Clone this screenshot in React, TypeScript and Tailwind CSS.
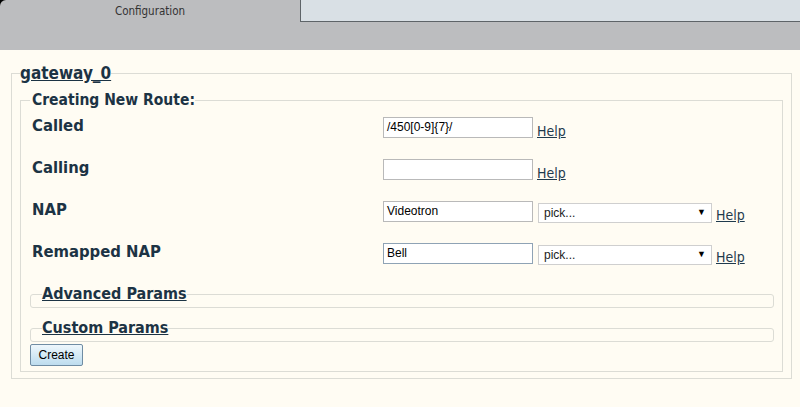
import React from 'react';

const cond = "font-['DejaVu_Sans_Condensed','DejaVu_Sans',sans-serif]";
const arial = "font-['Liberation_Sans',Arial,sans-serif]";

function HelpLink() {
  return (
    <a href="#" className={`${cond} self-end ml-[4px] text-[14px] leading-[14px] text-[#1f3a4d] underline`}>
      Help
    </a>
  );
}

function TextBox({ value, focused }: { value: string; focused?: boolean }) {
  return (
    <div
      className={`${arial} w-[150px] h-[21px] bg-white border ${
        focused ? 'border-[#8fa3b5]' : 'border-[#b9b9b9]'
      } px-[3px] text-[12px] leading-[19px] text-black`}
    >
      {value}
    </div>
  );
}

function PickBox() {
  return (
    <div
      className={`${arial} mt-[2px] ml-[5px] w-[174px] h-[20px] bg-white border border-[#cfcfcf] pl-[5px] pr-[5px] flex items-center justify-between text-[12px] text-[#222]`}
    >
      <span>pick...</span>
      <span className="text-[9px] text-black">▼</span>
    </div>
  );
}

function Row({ label, value, pick, focused, last }: { label: string; value: string; pick?: boolean; focused?: boolean; last?: boolean }) {
  return (
    <div className={`flex items-start h-[21px] ${last ? '' : 'mb-[21px]'}`}>
      <div className={`${cond} w-[353px] pl-[2px] font-bold text-[16.5px] leading-[18px] text-[#1c3344]`}>{label}</div>
      <TextBox value={value} focused={focused} />
      {pick && <PickBox />}
      <HelpLink />
    </div>
  );
}

function Collapsed({ title, className }: { title: string; className?: string }) {
  return (
    <fieldset className={`border border-[#dcdcd5] rounded-[3px] pl-[11px] pb-[4px] ${className ?? ''}`}>
      <legend className={`${cond} font-bold text-[16px] leading-[18px] text-[#1c3344] underline`}>{title}</legend>
    </fieldset>
  );
}

export default function App() {
  return (
    <div className="w-[800px] h-[407px] bg-[#fffcf3] overflow-hidden">
      {/* tab strip */}
      <div className="h-[50px] bg-black">
        <div className="h-[50px] bg-[#bcbdbf] rounded-tl-[6px]">
          <div className="flex h-[22px]">
            <div className={`${cond} w-[300px] text-center text-[11.5px] leading-[22px] text-[#333]`}>Configuration</div>
            <div className="flex-1 bg-[#d9e0e5] border-l border-b border-[#5e6468]" />
          </div>
        </div>
      </div>

      <div className="pt-[14px]">
        <fieldset className="ml-[11px] w-[781px] border border-[#dcdcd5] px-[8px] pt-[8px] pb-[6px]">
          <legend className={`${cond} font-bold text-[17px] leading-[19px] text-[#1c3344] underline`}>gateway_0</legend>

          <fieldset className="border border-[#dcdcd5] pl-[9px] pr-[8px] pt-[8px] pb-[5px]">
            <legend className={`${cond} pl-[2px] font-bold text-[15.5px] leading-[18px] text-[#1c3344]`}>Creating New Route:</legend>

            <Row label="Called" value="/450[0-9]{7}/" />
            <Row label="Calling" value="" />
            <Row label="NAP" value="Videotron" pick />
            <Row label="Remapped NAP" value="Bell" pick focused last />

            <Collapsed title="Advanced Params" className="mt-[21px]" />
            <Collapsed title="Custom Params" className="mt-[11px]" />

            <button
              className={`${arial} block mt-[2px] w-[53px] h-[22px] rounded-[2px] border border-[#6f8ca3] bg-gradient-to-b from-[#eef7fc] to-[#bddcee] text-[12px] text-black`}
            >
              Create
            </button>
          </fieldset>
        </fieldset>
      </div>
    </div>
  );
}
